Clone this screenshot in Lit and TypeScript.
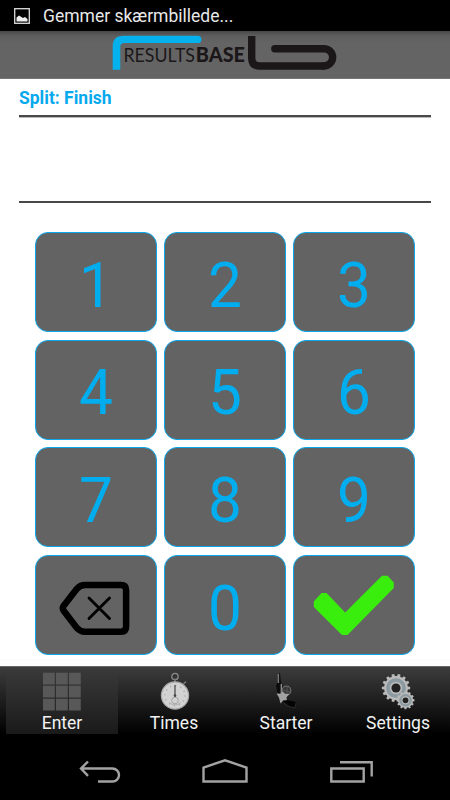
import { LitElement, html, svg, css } from "lit";
import { customElement } from "lit/decorators.js";

const gear = (cx: number, cy: number, r: number, n: number) => {
  const pts: string[] = [];
  for (let i = 0; i < n; i++) {
    [[-0.3, 0.84], [-0.2, 1], [0.2, 1], [0.3, 0.84]].forEach(([o, k]) => {
      const a = ((i + o) / n) * Math.PI * 2;
      pts.push(`${(cx + Math.cos(a) * r * k).toFixed(2)},${(cy + Math.sin(a) * r * k).toFixed(2)}`);
    });
  }
  return svg`<polygon points=${pts.join(" ")} fill="#bababa"/>
    <circle cx=${cx} cy=${cy} r=${r * 0.57} fill="none" stroke="#8b99a1" stroke-width=${r * 0.25}/>
    <circle cx=${cx} cy=${cy} r=${r * 0.32} fill="#222"/>`;
};

const gridIcon = svg`<g fill="#585858">
  ${[0, 1, 2].map((r) => [0, 1, 2].map((c) => svg`<rect x=${1 + c * 13} y=${0.7 + r * 13} width="11.8" height="11.8"/>`))}</g>`;

const watchIcon = svg`
  <circle cx="21" cy="4.500" r="3.2" fill="none" stroke="#8b8b8b" stroke-width="1.3"/>
  <path d="M21 6.500V11M29.500 12L32 9.500" stroke="#777" stroke-width="1.600"/>
  <circle cx="21" cy="23.500" r="13.600" fill="#d2d2d2" stroke="#a8a8a8" stroke-width="1.200"/>
  <circle cx="21" cy="23.500" r="10" fill="none" stroke="#a6a6a6" stroke-width="1.600" stroke-dasharray="1 4.236"/>
  <circle cx="21" cy="28.500" r="3.300" fill="none" stroke="#999" stroke-width=".8"/>
  <path d="M15 30.500q6 5 12 0" fill="none" stroke="#aaa" stroke-width=".8"/>
  <path d="M21 13V25" stroke="#444" stroke-width="1.200"/><circle cx="21" cy="23.500" r="1.300" fill="#444"/>`;

const pistolIcon = svg`
  <path d="M11.500 1h2.500l1 10 1.500 2-.5 9-4.500-1-1.500-7 1-3z" fill="#0c0c0c"/>
  <path d="M12.300 1.500V11" stroke="#777" stroke-width="1.600"/>
  <path d="M15.300 12V22" stroke="#8a8a8a" stroke-width="1.400"/>
  <circle cx="20.500" cy="18.500" r="4.300" fill="#333" stroke="#6a6a6a" stroke-width="1.200"/>
  <path d="M17 18l7 2M21 14v9" stroke="#555" stroke-width="1"/>
  <path d="M10.500 21.500l4 .3 2.500-2.300 2 2.300 4.500.2-3 3.300.5 4-3.500-1-3 3.200-1.500-6z" fill="#a2a2a2"/>
  <path d="M16.500 29l5-1 8 2q1.500 3-.5 6l-6-1.500z" fill="#040404"/>
  <path d="M18 31l5 3.500 6 1.500 1-5" fill="none" stroke="#333" stroke-width=".8"/>`;

const tabs = [
  { label: "Enter", icon: gridIcon },
  { label: "Times", icon: watchIcon },
  { label: "Starter", icon: pistolIcon },
  { label: "Settings", icon: svg`${gear(18, 16, 14.2, 14)}${gear(27.5, 28.3, 9, 12)}` },
];

const backspace = svg`<svg width="122" height="100" viewBox="0 0 122 100" fill="none" stroke="#000">
  <path d="M50 29.900H86Q91.100 29.900 91.100 35V71.500Q91.100 76.800 86 76.800H50Q45 76.800 41.500 72.500L28.500 55.500Q27 53.300 28.500 51.100L41.500 34.200Q45 29.900 50 29.900Z" stroke-width="6.500" stroke-linejoin="round"/>
  <path d="M54 43L74.500 63.500M74.500 43L54 63.500" stroke-width="2.900" stroke-linecap="round"/></svg>`;
const check = svg`<svg width="122" height="100" viewBox="0 0 122 100">
  <path d="M20.800 46.500V52L49 80H54.500L100.800 33V27.500L94.500 20.800H89L52.200 57.500L33.500 38H28.500Z" fill="#39ee0c"/></svg>`;

@customElement("app-root")
export class AppRoot extends LitElement {
  static styles = css`
    :host { display: flex; flex-direction: column; width: 450px; height: 800px; overflow: hidden;
      background: #fff; font-family: Roboto, sans-serif; }
    svg { display: block; flex: none; }
    .status { height: 31px; flex: none; box-sizing: border-box; background: #000; color: #e8e8e8; display: flex; align-items: center;
      padding: 0 0 0 14px; gap: 13px; font-size: 17.500px; }
    .status span { white-space: nowrap; }
    .brand { height: 47.500px; flex: none; background: linear-gradient(#484848, #5e5e5e 5px, #646464 12px, #646464); box-sizing: border-box;
      border-bottom: 1px solid #777; }
    .logo { font-family: Lato, sans-serif; font-size: 20px; }
    .bold { font-weight: 900; }
    .entry { height: 124.500px; flex: none; box-sizing: border-box; padding: 8px 19px 0; display: flex; flex-direction: column; }
    .split { height: 28.500px; line-height: 23px; font-size: 17.500px; font-weight: 700; color: #06a9ed; }
    .value { height: 84px; border-top: 2px solid #484848; border-bottom: 2px solid #484848;
      box-shadow: 0 1px #b8b8b8, inset 0 1px #b8b8b8; }
    .pad { flex: none; height: 463px; box-sizing: border-box; padding: 29px 35px 0; display: grid;
      grid-template-columns: repeat(3, 121.600px); grid-auto-rows: 100px; column-gap: 7.500px; row-gap: 7.700px;
      align-content: start; background: linear-gradient(#fff 456px, #fcfcfc 456px); }
    .key { box-sizing: border-box; border: 1px solid #08a8ec; border-radius: 13px; background: #636363;
      color: #00aef0; font-size: 63.500px; display: flex; align-items: center; justify-content: center; overflow: hidden; }
    .digit { line-height: 100px; padding-top: 7px; transform: scaleX(.95); }
    .tabs { height: 74px; flex: none; box-sizing: border-box; display: grid; grid-template-columns: repeat(4, 112px);
      padding: 5px 0 6px 6px; background: linear-gradient(#3c3c3c, #000 92%); border-top: 1px solid #666; }
    .tab { display: flex; flex-direction: column; align-items: center; color: #f2f2f2; font-size: 17.500px; }
    .tab.on { background: linear-gradient(#383838, #1a1a1a); }
    .label { line-height: 22px; }
    .nav { flex: 1; background: #000; }
  `;

  render() {
    const keys = ["1", "2", "3", "4", "5", "6", "7", "8", "9", backspace, "0", check];
    return html`
      <div class="status">
        <svg width="16" height="16" viewBox="0 0 16 16">
          <rect x=".7" y=".7" width="14.600" height="14.600" fill="none" stroke="#ddd" stroke-width="1.300"/>
          <path d="M2.500 13.500V9.500L5 7.500L9 10L11 9L13.500 11V13.500Z" fill="#eee"/>
        </svg>
        <span>Gemmer skærmbillede...</span>
      </div>
      <div class="brand">
        <svg width="450" height="46" viewBox="0 31 450 46">
          <path d="M112.700 69.700V46.500Q112.700 35.700 123.500 35.700H197.700A3.700 3.700 0 0 1 197.700 43.100H124.500Q120.300 43.100 120.300 47.300V69.700Z" fill="#05b1ec"/>
          <path d="M251.700 36V58Q251.700 66 259.700 66H324" fill="none" stroke="#1b1719" stroke-width="7.400"/>
          <path d="M323.500 66H324A8.600 8.600 0 0 0 324 48.700H274.800" fill="none" stroke="#1b1719" stroke-width="7.400" stroke-linecap="round"/>
          <g class="logo" fill="#1b1719">
            <text x="123.500" y="61.700" textLength="71.500" lengthAdjust="spacingAndGlyphs">RESULTS</text>
            <text class="bold" x="195.800" y="61.700" textLength="49.200" lengthAdjust="spacingAndGlyphs">BASE</text>
          </g>
        </svg>
      </div>
      <div class="entry">
        <div class="split">Split: Finish</div>
        <div class="value"></div>
      </div>
      <div class="pad">
        ${keys.map((k) => html`<div class="key">${typeof k === "string" ? html`<span class="digit">${k}</span>` : k}</div>`)}
      </div>
      <div class="tabs">
        ${tabs.map((t, i) => html`<div class="tab ${i === 0 ? "on" : ""}">
          <svg width="40" height="40" viewBox="0 0 40 40">${t.icon}</svg>
          <span class="label">${t.label}</span>
        </div>`)}
      </div>
      <div class="nav">
        <svg width="450" height="60" viewBox="0 740 450 60" fill="none" stroke="#a3a3a3" stroke-width="2.400">
          <path d="M98 781.500H112.500A6.500 6.500 0 0 0 112.500 768.500H81M88 761.500L81 768.500L88 775.800"/>
          <path d="M203.500 781.500V767.500L225 760.300L246.500 767.500V781.500Z"/>
          <path d="M331.300 768.500H363.700V781.500H331.300ZM340 762.300H371.700V776.500"/>
        </svg>
      </div>`;
  }
}
